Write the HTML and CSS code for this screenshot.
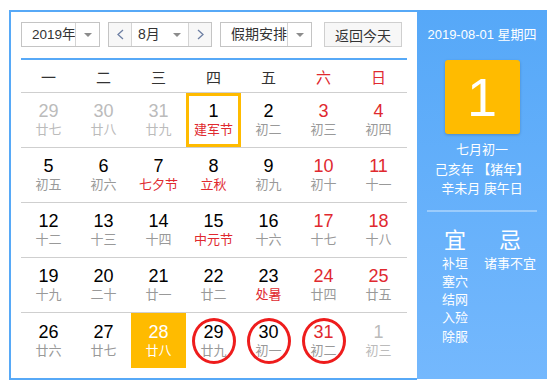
FILE: index.html
```html
<!DOCTYPE html>
<html lang="zh-CN">
<head>
    <meta charset="UTF-8">
    <meta name="viewport" content="width=device-width, initial-scale=1.0">
    <title>万年历</title>
    <link rel="stylesheet" href="styles.css">
</head>
<body>
    <div class="calendar">
        <div class="main">
            <div class="toolbar">
                <div class="select year">
                    <span class="value">2019年</span>
                    <span class="arrow"><i class="caret"></i></span>
                </div>
                <div class="select month">
                    <span class="step"><svg width="7" height="11" viewBox="0 0 7 11"><polyline points="6,1 1,5.5 6,10" fill="none" stroke="#6d7fa3" stroke-width="1.3"/></svg></span>
                    <span class="value">8月</span>
                    <span class="caret-plain"><i class="caret"></i></span>
                    <span class="step next"><svg width="7" height="11" viewBox="0 0 7 11"><polyline points="1,1 6,5.5 1,10" fill="none" stroke="#6d7fa3" stroke-width="1.3"/></svg></span>
                </div>
                <div class="select holiday">
                    <span class="value">假期安排</span>
                    <span class="arrow"><i class="caret"></i></span>
                </div>
                <button class="today-btn">返回今天</button>
            </div>

            <div class="weekdays">
                <span>一</span><span>二</span><span>三</span><span>四</span><span>五</span><span class="red">六</span><span class="red">日</span>
            </div>

            <div class="days">
                <div class="week">
                    <div class="day other"><b>29</b><small>廿七</small></div>
                    <div class="day other"><b>30</b><small>廿八</small></div>
                    <div class="day other"><b>31</b><small>廿九</small></div>
                    <div class="day selected"><b>1</b><small class="fest">建军节</small></div>
                    <div class="day"><b>2</b><small>初二</small></div>
                    <div class="day weekend"><b>3</b><small>初三</small></div>
                    <div class="day weekend"><b>4</b><small>初四</small></div>
                </div>
                <div class="week">
                    <div class="day"><b>5</b><small>初五</small></div>
                    <div class="day"><b>6</b><small>初六</small></div>
                    <div class="day"><b>7</b><small class="fest">七夕节</small></div>
                    <div class="day"><b>8</b><small class="fest">立秋</small></div>
                    <div class="day"><b>9</b><small>初九</small></div>
                    <div class="day weekend"><b>10</b><small>初十</small></div>
                    <div class="day weekend"><b>11</b><small>十一</small></div>
                </div>
                <div class="week">
                    <div class="day"><b>12</b><small>十二</small></div>
                    <div class="day"><b>13</b><small>十三</small></div>
                    <div class="day"><b>14</b><small>十四</small></div>
                    <div class="day"><b>15</b><small class="fest">中元节</small></div>
                    <div class="day"><b>16</b><small>十六</small></div>
                    <div class="day weekend"><b>17</b><small>十七</small></div>
                    <div class="day weekend"><b>18</b><small>十八</small></div>
                </div>
                <div class="week">
                    <div class="day"><b>19</b><small>十九</small></div>
                    <div class="day"><b>20</b><small>二十</small></div>
                    <div class="day"><b>21</b><small>廿一</small></div>
                    <div class="day"><b>22</b><small>廿二</small></div>
                    <div class="day"><b>23</b><small class="fest">处暑</small></div>
                    <div class="day weekend"><b>24</b><small>廿四</small></div>
                    <div class="day weekend"><b>25</b><small>廿五</small></div>
                </div>
                <div class="week">
                    <div class="day"><b>26</b><small>廿六</small></div>
                    <div class="day"><b>27</b><small>廿七</small></div>
                    <div class="day today"><b>28</b><small>廿八</small></div>
                    <div class="day"><b>29</b><small>廿九</small><span class="ring"></span></div>
                    <div class="day"><b>30</b><small>初一</small><span class="ring"></span></div>
                    <div class="day weekend"><b>31</b><small>初二</small><span class="ring"></span></div>
                    <div class="day other"><b>1</b><small>初三</small></div>
                </div>
            </div>
        </div>

        <div class="panel">
            <div class="panel-date">2019-08-01 星期四</div>
            <div class="big-day">1</div>
            <div class="lunar">
                <p>七月初一</p>
                <p>己亥年 【猪年】</p>
                <p>辛未月 庚午日</p>
            </div>
            <div class="divider"></div>
            <div class="almanac">
                <div class="col yi">
                    <h2>宜</h2>
                    <p>补垣</p>
                    <p>塞穴</p>
                    <p>结网</p>
                    <p>入殓</p>
                    <p>除服</p>
                </div>
                <div class="col ji">
                    <h2>忌</h2>
                    <p>诸事不宜</p>
                </div>
            </div>
        </div>
    </div>
</body>
</html>
```

FILE: styles.css
```css
body {
    margin: 0;
    padding: 0;
    background-color: #fff;
    font-family: "Liberation Sans", "Noto Sans CJK SC", sans-serif;
    color: #333;
}
.calendar {
    display: flex;
    width: 538px;
    height: 370px;
    margin: 10px 0 0 9px;
}
.main {
    width: 408px;
    box-sizing: border-box;
    border: 2px solid #57a9f7;
    border-right: 0;
    padding: 10px 10px 10px 10px;
}

/* toolbar */
.toolbar {
    display: flex;
    height: 25px;
}
.select {
    display: flex;
    height: 25px;
    box-sizing: border-box;
    border: 1px solid #c4c4c4;
    font-size: 14px;
    line-height: 23px;
    color: #333;
    white-space: nowrap;
}
.select .value {
    padding-left: 10px;
    flex: 1;
    min-width: 0;
}
.select .arrow {
    flex: none;
    width: 23px;
    border-left: 1px solid #d4d4d4;
    background-color: #fff;
    display: flex;
    align-items: center;
    justify-content: center;
}
.caret {
    width: 0;
    height: 0;
    border-left: 4px solid transparent;
    border-right: 4px solid transparent;
    border-top: 4px solid #8c8c8c;
}
.year {
    width: 79px;
}
.year .value {
    font-size: 13.5px;
}
.month {
    width: 104px;
    margin-left: 8px;
}
.month .value {
    padding-left: 6px;
}
.month .caret-plain {
    width: 22px;
    display: flex;
    align-items: center;
    justify-content: center;
}
.month .step {
    width: 22px;
    background-color: #f7f7f7;
    border-right: 1px solid #d4d4d4;
    display: flex;
    align-items: center;
    justify-content: center;
}
.month .step.next {
    border-right: 0;
    border-left: 1px solid #d4d4d4;
}
.holiday {
    width: 92px;
    margin-left: 8px;
}
.today-btn {
    width: 78px;
    height: 25px;
    margin-left: 12px;
    padding: 0;
    border: 1px solid #cfcfcf;
    background-color: #f7f7f7;
    font-family: "Noto Sans CJK SC", sans-serif;
    font-size: 14px;
    color: #333;
}

/* weekday header */
.weekdays {
    display: grid;
    grid-template-columns: repeat(7, 55px);
    margin-top: 11px;
    border-top: 2px solid #57a9f7;
    border-bottom: 1px solid #cfcfcf;
    height: 35px;
    box-sizing: border-box;
    align-items: center;
    text-align: center;
    font-size: 15px;
    color: #333;
}
.weekdays .red {
    color: #e0292f;
}

/* day grid */
.week {
    display: grid;
    grid-template-columns: repeat(7, 55px);
    height: 55px;
    box-sizing: border-box;
    border-bottom: 1px solid #cfcfcf;
}
.week:last-child {
    border-bottom: 0;
}
.day {
    position: relative;
    display: flex;
    flex-direction: column;
    align-items: center;
    justify-content: center;
    box-sizing: border-box;
}
.day b {
    font-weight: normal;
    font-size: 18px;
    line-height: 20px;
    color: #000;
}
.day small {
    font-size: 13px;
    line-height: 18px;
    color: #999;
}
.day.weekend b {
    color: #e0292f;
}
.day small.fest {
    color: #e0292f;
}
.day.other b,
.day.other small {
    color: #bbb;
}
.day.selected {
    border: 3px solid #ffbb00;
}
.day.today {
    background-color: #ffbb00;
}
.day.today b,
.day.today small {
    color: #fff;
}
.ring {
    position: absolute;
    left: 50%;
    top: 50%;
    width: 44px;
    height: 46px;
    margin: -23px 0 0 -22px;
    box-sizing: border-box;
    border: 3px solid #ee1c1c;
    border-radius: 50%;
}

/* side panel */
.panel {
    width: 130px;
    height: 369px;
    background: linear-gradient(#56a8f8, #74b8fd);
    color: #fff;
    text-align: center;
    font-family: "Liberation Sans", "Noto Sans CJK SC", sans-serif;
}
.panel-date {
    margin-top: 16px;
    font-size: 13px;
    line-height: 18px;
}
.big-day {
    width: 75px;
    height: 74px;
    margin: 16px auto 0;
    background-color: #ffbb00;
    border-radius: 3px;
    box-shadow: 0 1px 3px rgba(0, 0, 0, 0.2);
    font-size: 54px;
    line-height: 74px;
}
.lunar {
    margin-top: 6px;
    font-size: 13px;
}
.lunar p {
    margin: 0;
    line-height: 19.5px;
}
.divider {
    height: 2px;
    margin: 11px 10px 0;
    background-color: rgba(255, 255, 255, 0.35);
}
.almanac {
    display: flex;
    padding-left: 25px;
    margin-top: 16px;
}
.almanac .col {
    display: flex;
    flex-direction: column;
    align-items: center;
}
.almanac .yi {
    width: 26px;
}
.almanac .ji {
    width: 52px;
    margin-left: 16px;
}
.almanac h2 {
    margin: 0 0 1px;
    font-size: 22px;
    font-weight: normal;
    line-height: 26px;
}
.almanac p {
    margin: 0;
    font-size: 13px;
    line-height: 18.3px;
    white-space: nowrap;
}
```
